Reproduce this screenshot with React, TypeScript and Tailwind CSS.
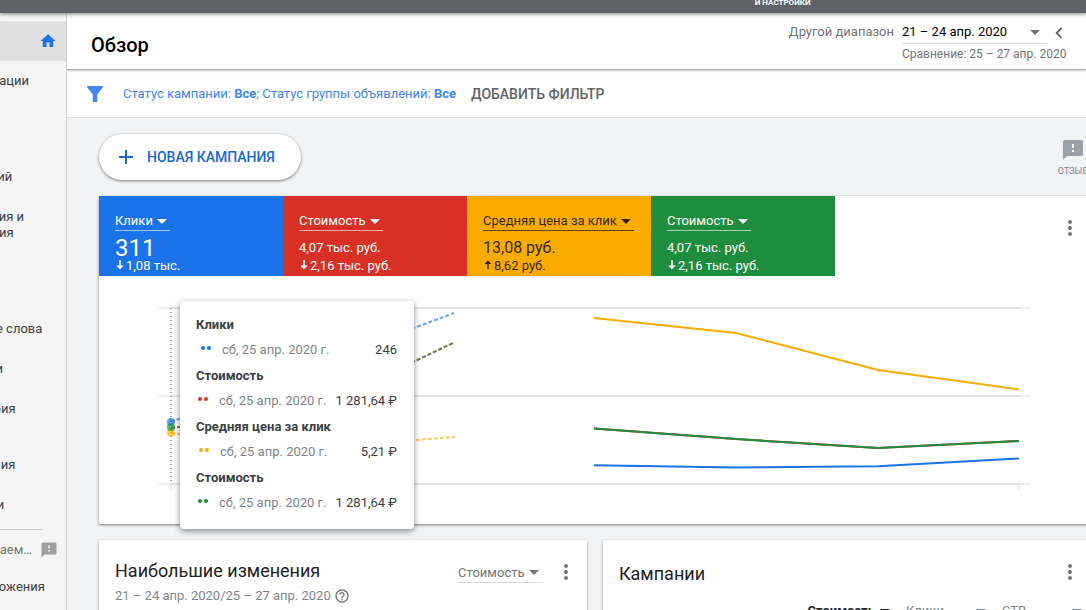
import { MdChevronLeft, MdFeedback, MdHelpOutline, MdHome, MdMoreVert } from "react-icons/md";

interface ICaretProps {
  className?: string;
}

interface IMetric {
  id: string;
  title: string;
  value: string;
  valueClass: string;
  delta: string;
  isUp?: boolean;
  tileClass: string;
  lineClass: string;
}

interface ITooltipItem {
  id: string;
  title: string;
  value: string;
  rowClass: string;
  dotClass: string;
}

const NAV_ITEMS = [
  { id: "recommendations", lines: ["Рекомендации"] },
  { id: "campaigns", lines: ["Кампании"] },
  { id: "groups", lines: ["Группы", "объявлений"] },
  { id: "ads", lines: ["Объявления и", "расширения"] },
  { id: "landing", lines: ["Целевые", "страницы"] },
  { id: "keywords", lines: ["Ключевые слова"] },
  { id: "audiences", lines: ["Аудитории"] },
  { id: "demography", lines: ["Демография"] },
  { id: "placements", lines: ["Места", "размещения"] },
  { id: "settings", lines: ["Настройки"] },
];

const METRICS: IMetric[] = [
  {
    id: "clicks",
    title: "Клики",
    value: "311",
    valueClass: "text-2xl leading-5",
    delta: "1,08 тыс.",
    tileClass: "bg-[#1a73e8] text-white",
    lineClass: "border-white/60",
  },
  {
    id: "cost",
    title: "Стоимость",
    value: "4,07 тыс. руб.",
    valueClass: "text-[13px] leading-5",
    delta: "2,16 тыс. руб.",
    tileClass: "bg-[#d93025] text-white",
    lineClass: "border-white/60",
  },
  {
    id: "cpc",
    title: "Средняя цена за клик",
    value: "13,08 руб.",
    valueClass: "text-base leading-5",
    delta: "8,62 руб.",
    isUp: true,
    tileClass: "bg-[#f9ab00] text-black/80",
    lineClass: "border-black/60",
  },
  {
    id: "cost2",
    title: "Стоимость",
    value: "4,07 тыс. руб.",
    valueClass: "text-[13px] leading-5",
    delta: "2,16 тыс. руб.",
    tileClass: "bg-[#1e8e3e] text-white",
    lineClass: "border-white/60",
  },
];

const TOOLTIP_ITEMS: ITooltipItem[] = [
  { id: "clicks", title: "Клики", value: "246", rowClass: "pl-[5px]", dotClass: "bg-[#1a73e8]" },
  { id: "cost", title: "Стоимость", value: "1 281,64 ₽", rowClass: "pl-[2px]", dotClass: "bg-[#d93025]" },
  { id: "cpc", title: "Средняя цена за клик", value: "5,21 ₽", rowClass: "pl-[3px]", dotClass: "bg-[#f9ab00]" },
  { id: "cost2", title: "Стоимость", value: "1 281,64 ₽", rowClass: "pl-[2px]", dotClass: "bg-[#1e8e3e]" },
];

function Caret({ className }: ICaretProps) {
  return (
    <svg width="10" height="5" viewBox="0 0 10 5" fill="currentColor" className={`shrink-0 ${className ?? ""}`} aria-hidden="true">
      <path d="M0 0h10L5 5z" />
    </svg>
  );
}

function DeltaArrow({ isUp }: { isUp?: boolean }) {
  return (
    <svg width="8" height="10" viewBox="0 0 8 10" fill="currentColor" className="mb-0.5" aria-hidden="true">
      {isUp ? <path d="M3.300 9V4H.5L4 .5L7.500 4H4.700V9z" /> : <path d="M3.200 0V5.500H.3L4 9.500L7.700 5.500H4.800V0z" />}
    </svg>
  );
}

function MoreButton({ label }: { label: string }) {
  return (
    <button type="button" aria-label={label} className="text-[#757575]">
      <MdMoreVert size={24} />
    </button>
  );
}

function Sidebar() {
  return (
    <aside className="w-[67px] shrink-0 overflow-hidden border-r border-[#d0d0d0] bg-[#f5f5f5] pt-2 text-[13px] leading-4 text-[#3c4043]">
      <a href="#overview" aria-label="Обзор" className="flex h-10 items-center justify-end bg-[#e0e0e0] pr-[9px] text-[#1a73e8]">
        <MdHome size={18} />
      </a>
      {/* the menu is scrolled sideways, only the ends of the names stay visible */}
      <nav className="-ml-[62px] w-[128px] whitespace-nowrap">
        {NAV_ITEMS.map((item) => (
          <a key={item.id} href={`#${item.id}`} className="block py-3">
            {item.lines.map((line) => (
              <span key={line} className="block">
                {line}
              </span>
            ))}
          </a>
        ))}
        <div className="mt-1 mr-6 border-t border-[#ccc]" />
        <a href="#frequent" className="mt-3 flex h-4 items-center justify-end gap-2 pr-2 text-[#757575]">
          Часто посещаем…
          <MdFeedback size={18} className="shrink-0 text-[#9e9e9e]" />
        </a>
        <a href="#locations" className="block pt-[21px]">
          Местоположения
        </a>
      </nav>
    </aside>
  );
}

function PageHeader() {
  return (
    <header className="relative flex h-[57px] items-start justify-between border-b border-[#aaa] bg-white pr-5 pl-6 shadow-[0_1px_2px_rgba(0,0,0,0.2)]">
      <h1 className="pt-[18px] text-xl leading-7 font-medium text-black">Обзор</h1>
      <div className="flex gap-2 pt-2 text-[13px] leading-[22px]">
        <label htmlFor="range" className="text-[#757575]">
          Другой диапазон
        </label>
        <div className="w-[164px]">
          <div className="flex items-center">
            <div className="flex w-[145px] shrink-0 items-center justify-between border-b border-[#dadada] pr-[7px]">
              <select id="range" className="appearance-none text-black outline-none">
                <option>21 – 24 апр. 2020</option>
              </select>
              <Caret className="text-[#757575]" />
            </div>
            <button type="button" aria-label="Назад" className="ml-px text-[#616161]">
              <MdChevronLeft size={22} />
            </button>
          </div>
          <p className="text-xs leading-5 whitespace-nowrap text-[#757575]">Сравнение: 25 – 27 апр. 2020</p>
        </div>
      </div>
    </header>
  );
}

function FilterBar() {
  return (
    <div className="flex h-12 items-center border-b border-[#dadce0] bg-white pl-5 text-[13px]">
      <svg width="16" height="16" viewBox="0 0 16 16" fill="#4285f4" aria-hidden="true">
        <path d="M0 0h16v1L10.200 8.500V16H5.800V8.500L0 1z" />
      </svg>
      <a href="#filters" className="ml-5 text-[#4285f4]">
        Статус кампании: <b>Все</b>; Статус группы объявлений: <b>Все</b>
      </a>
      <button type="button" className="ml-[15px] text-sm font-medium text-[#5f6368]">
        ДОБАВИТЬ ФИЛЬТР
      </button>
    </div>
  );
}

function MetricTile({ metric }: { metric: IMetric }) {
  return (
    <div className={`flex h-20 w-[184px] flex-col items-start pt-4 pl-4 text-[13px] ${metric.tileClass}`}>
      <div className={`flex h-[19px] items-center gap-1 border-b pr-[3px] ${metric.lineClass}`}>
        <select aria-label="Показатель" className="appearance-none outline-none">
          <option>{metric.title}</option>
        </select>
        <Caret />
      </div>
      <p className={`mt-[7px] ${metric.valueClass}`}>{metric.value}</p>
      <p className="flex items-center gap-[2px] pl-[1px] leading-4">
        <DeltaArrow isUp={metric.isUp} />
        {metric.delta}
      </p>
    </div>
  );
}

function TrendChart() {
  return (
    <svg viewBox="0 0 992 248" className="block w-full" fill="none" strokeWidth="2" role="img" aria-label="Динамика показателей">
      <g stroke="#efefef">
        <path d="M60 32H932M60 120H932M60 208H932" />
        <path d="M72 208v6M920 208v6" />
      </g>
      <path d="M72 32H920M72 120H920M72 208H920" stroke="#e4e4e4" />
      <path d="M72 32V208" stroke="#9e9e9e" strokeDasharray="1 3" />
      <g strokeDasharray="4 2" strokeOpacity="0.65">
        <path d="M72 146L213 90L355 37" stroke="#1a73e8" />
        <path d="M72 152L213 134L354 67" stroke="#d93025" />
        <path d="M72 152L213 134L354 67" stroke="#1e8e3e" />
        <path d="M72 157L213 172L356 161" stroke="#f9ab00" />
      </g>
      <g fillOpacity="0.7">
        <circle cx="72" cy="157" r="4" fill="#f9ab00" />
        <circle cx="72" cy="146" r="4" fill="#1a73e8" />
        <circle cx="72" cy="151" r="4" fill="#1e8e3e" />
      </g>
      <path d="M495 42L637 57L779 94L920 113.500" stroke="#f9ab00" />
      <path d="M495 152.500L637 163L779 172L920 165" stroke="#d93025" />
      <path d="M495 152.500L637 163L779 172L920 165" stroke="#1e8e3e" />
      <path d="M495 189.300L637 191.500L779 190.300L920 182.500" stroke="#1a73e8" />
    </svg>
  );
}

function ChartTooltip() {
  return (
    <dl className="absolute top-[25px] left-[81px] w-[234px] rounded-sm bg-white px-4 pt-3 pb-3 text-[13px] shadow-[0_2px_6px_rgba(0,0,0,0.45)]">
      {TOOLTIP_ITEMS.map((item) => (
        <div key={item.id} className="pb-0.5">
          <dt className="leading-6 font-bold text-[#3c4043]">{item.title}</dt>
          <dd className={`flex items-center leading-[25px] ${item.rowClass}`}>
            <span className="mr-[11px] mb-1 flex gap-0.5">
              <i className={`size-1 rounded-full ${item.dotClass}`} />
              <i className={`size-1 rounded-full ${item.dotClass}`} />
            </span>
            <span className="text-[#80868b]">сб, 25 апр. 2020 г.</span>
            <span className="ml-auto pr-px whitespace-nowrap text-[#3c4043]">{item.value}</span>
          </dd>
        </div>
      ))}
    </dl>
  );
}

function ChartCard() {
  return (
    <section className="rounded-xs bg-white shadow-[0_1px_3px_rgba(0,0,0,0.5)]">
      <div className="flex items-start justify-between pr-[9px]">
        <div className="flex">
          {METRICS.map((metric) => (
            <MetricTile key={metric.id} metric={metric} />
          ))}
        </div>
        <div className="pt-5">
          <MoreButton label="Действия с диаграммой" />
        </div>
      </div>
      <div className="relative">
        <TrendChart />
        <ChartTooltip />
      </div>
    </section>
  );
}

function ChangesCard() {
  return (
    <section className="h-60 rounded-xs bg-white px-4 pt-[19px] shadow-[0_1px_3px_rgba(0,0,0,0.4)]">
      <div className="flex items-start justify-between">
        <div>
          <h2 className="text-lg leading-6 text-[#212121]">Наибольшие изменения</h2>
          <p className="flex items-center gap-[3px] pt-[3px] text-[13px] leading-5 text-[#80868b]">
            21 – 24 апр. 2020/25 – 27 апр. 2020
            <MdHelpOutline size={16} className="text-[#757575]" />
          </p>
        </div>
        <div className="-mr-[7px] flex items-start gap-[11px] pt-px">
          <div className="mt-[3px] flex h-5 items-center gap-1 border-b border-[#dadada] pr-1 text-[13px] text-[#757575]">
            <select aria-label="Показатель изменений" className="appearance-none outline-none">
              <option>Стоимость</option>
            </select>
            <Caret />
          </div>
          <MoreButton label="Действия с изменениями" />
        </div>
      </div>
    </section>
  );
}

function CampaignsCard() {
  return (
    <section className="h-60 rounded-xs bg-white pt-5 pr-[9px] pl-4 shadow-[0_1px_3px_rgba(0,0,0,0.4)]">
      <div className="flex items-start justify-between">
        <h2 className="pt-[2px] text-lg leading-6 text-[#212121]">Кампании</h2>
        <MoreButton label="Действия с кампаниями" />
      </div>
      <table className="mt-4 w-full table-fixed text-[13px] leading-[18px] text-[#80868b]">
        <thead>
          <tr>
            <th aria-label="Кампания" />
            <th className="w-24 font-bold text-[#212121]">
              <button type="button" className="flex w-full items-center justify-end gap-[5px]">
                Стоимость <Caret />
              </button>
            </th>
            <th className="w-24 pl-4 font-normal">
              <button type="button" className="flex w-full items-center justify-between">
                Клики <Caret />
              </button>
            </th>
            <th className="w-24 pl-4 font-normal">
              <button type="button" className="flex w-full items-center justify-between">
                CTR <Caret />
              </button>
            </th>
          </tr>
        </thead>
      </table>
    </section>
  );
}

function App() {
  return (
    <div className="flex h-screen flex-col overflow-hidden bg-[#f1f3f4] font-[Roboto,sans-serif]">
      <div className="relative z-10 flex h-[13px] shrink-0 bg-[#5f6368] shadow-[0_1px_4px_rgba(0,0,0,0.5)]">
        <div className="ml-[69.5%] flex items-end overflow-hidden pb-1.5 text-[8px] leading-[9px] font-bold text-white">
          И НАСТРОЙКИ
        </div>
      </div>
      <div className="flex min-h-0 flex-1">
        <Sidebar />
        <main className="min-w-0 flex-1 overflow-hidden">
          <PageHeader />
          <FilterBar />
          <div className="-mr-[5px] flex flex-col gap-4 pt-4 pl-8">
            <div className="flex items-start justify-between">
              <button
                type="button"
                className="flex h-[46px] items-center gap-[14px] rounded-full bg-white pr-[26px] pl-5 text-sm font-medium text-[#1967d2] shadow-[0_1px_3px_rgba(0,0,0,0.5)]"
              >
                <svg width="14" height="14" viewBox="0 0 14 14" stroke="currentColor" strokeWidth="2" aria-hidden="true">
                  <path d="M7 0v14M0 7h14" />
                </svg>
                НОВАЯ КАМПАНИЯ
              </button>
              <button type="button" className="flex flex-col items-center pt-1 pr-[3px] text-[9px] leading-[18px] text-[#80868b]">
                <MdFeedback size={24} className="text-[#9aa0a6]" />
                ОТЗЫВ
              </button>
            </div>
            <ChartCard />
            <div className="grid grid-cols-2 gap-4">
              <ChangesCard />
              <CampaignsCard />
            </div>
          </div>
        </main>
      </div>
    </div>
  );
}

export default App;
